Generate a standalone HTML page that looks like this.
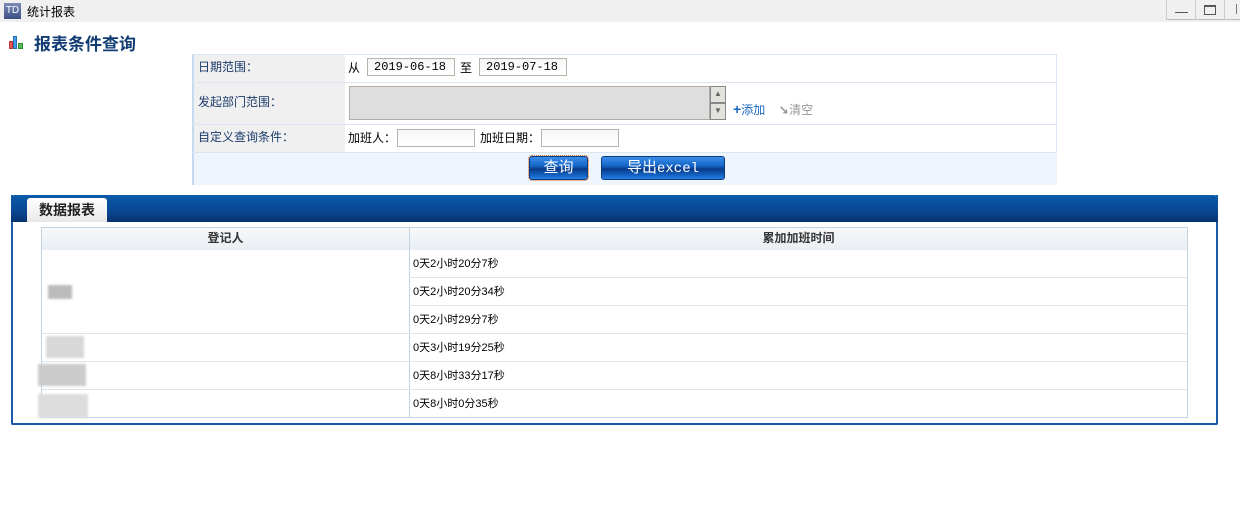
<!DOCTYPE html>
<html><head><meta charset="utf-8"><style>
*{margin:0;padding:0;box-sizing:border-box}
body{width:1240px;height:512px;background:#fff;font-family:"Liberation Sans","Noto Sans CJK SC",sans-serif;font-size:12px;position:relative;overflow:hidden;color:#000}
.a{position:absolute}
.inp{position:absolute;height:18px;border:1px solid #b8b2a8;background:linear-gradient(#f6f6f6,#fff);font-family:"Liberation Mono",monospace;font-size:12px;padding:1px 0 0 6px}
.lab{position:absolute;left:192px;width:153px;background:#f0f0f0;color:#1b3a6b;padding-left:4px;border-left:2px solid #c5daf0}
.hl{position:absolute;left:192px;width:865px;height:1px;background:#dae6f2}
.btn{position:absolute;border:1px solid #0a3a80;border-radius:3px;background:linear-gradient(#3a8ee8 0%,#1466c8 40%,#0a3a88 55%,#1466c8 85%,#2a80e0 100%);color:#fff;font-size:15px;text-align:center;line-height:22px}
.row{position:absolute;left:409px;width:778px;height:1px;background:#dde6ee}
.cell{position:absolute;left:413px;font-size:11px}
.blur{position:absolute;background:#bbb;filter:blur(1px)}
</style></head><body>
<div class="a" style="left:0;top:0;width:1240px;height:22px;background:#f0f0f0"></div>
<div class="a" style="left:4px;top:3px;width:17px;height:16px;background:linear-gradient(#7a8bb8,#3d4f82);color:#fff;font-size:10px;line-height:16px;text-align:center">TD</div>
<div class="a" style="left:27px;top:3px;font-size:12px">统计报表</div>
<div class="a" style="left:1166px;top:0;width:74px;height:20px;border-bottom:1px solid #bbb"></div>
<div class="a" style="left:1166px;top:0;width:1px;height:20px;background:#ccc"></div>
<div class="a" style="left:1195px;top:0;width:1px;height:20px;background:#ccc"></div>
<div class="a" style="left:1224px;top:0;width:1px;height:20px;background:#ccc"></div>
<div class="a" style="left:1175px;top:12px;width:13px;height:1px;background:#555"></div>
<div class="a" style="left:1204px;top:5px;width:12px;height:10px;border:1px solid #555;border-top-width:2px"></div>
<div class="a" style="left:1236px;top:4px;width:1px;height:10px;background:#777"></div>
<!-- header -->
<div class="a" style="left:9px;top:41px;width:4px;height:8px;background:#e55;border:1px solid #b33"></div>
<div class="a" style="left:13px;top:36px;width:4px;height:13px;background:#49e;border:1px solid #27a"></div>
<div class="a" style="left:18px;top:43px;width:5px;height:6px;background:#5b5;border:1px solid #383"></div>
<div class="a" style="left:34px;top:30px;font-size:17px;font-weight:bold;color:#123e74">报表条件查询</div>
<!-- query table -->
<div class="a" style="left:192px;top:54px;width:865px;height:131px;border:1px solid #dae6f2;border-left:none"></div>
<div class="lab" style="top:55px;height:27px;line-height:24px">日期范围：</div>
<div class="lab" style="top:83px;height:41px;line-height:38px">发起部门范围：</div>
<div class="lab" style="top:125px;height:27px;line-height:24px">自定义查询条件：</div>
<div class="a" style="left:192px;top:153px;width:865px;height:32px;background:#eef5fd;border-left:2px solid #c5daf0"></div>
<div class="hl" style="top:82px"></div><div class="hl" style="top:124px"></div><div class="hl" style="top:152px"></div>
<div class="a" style="left:348px;top:59px">从</div>
<div class="inp" style="left:367px;top:58px;width:88px">2019-06-18</div>
<div class="a" style="left:460px;top:59px">至</div>
<div class="inp" style="left:479px;top:58px;width:88px">2019-07-18</div>
<div class="a" style="left:349px;top:86px;width:361px;height:34px;background:#dedede;border:1px solid #b0aca6"></div>
<div class="a" style="left:710px;top:86px;width:16px;height:17px;background:#e4e2dc;border:1px solid #888;color:#666;font-size:8px;text-align:center;line-height:14px">▲</div>
<div class="a" style="left:710px;top:103px;width:16px;height:17px;background:#e4e2dc;border:1px solid #888;color:#666;font-size:8px;text-align:center;line-height:14px">▼</div>
<div class="a" style="left:733px;top:101px;color:#1a68c0"><b style="font-size:14px">+</b>添加</div>
<div class="a" style="left:779px;top:101px;color:#999"><b>➘</b>清空</div>
<div class="a" style="left:348px;top:129px">加班人：</div>
<div class="inp" style="left:397px;top:129px;width:78px"></div>
<div class="a" style="left:480px;top:129px">加班日期：</div>
<div class="inp" style="left:541px;top:129px;width:78px"></div>
<div class="btn" style="left:529px;top:156px;width:59px;height:24px;outline:1px dotted #e07020">查询</div>
<div class="btn" style="left:601px;top:156px;width:124px;height:24px">导出<span style="font-family:'Liberation Mono',monospace;font-size:14px">excel</span></div>
<!-- panel -->
<div class="a" style="left:11px;top:195px;width:1207px;height:230px;border:2px solid #1a5aa8;border-top:none;border-radius:0 0 2px 2px"></div>
<div class="a" style="left:11px;top:195px;width:1207px;height:27px;background:linear-gradient(#0a5aa8,#0a4a98 50%,#083470);border-radius:4px 4px 0 0"></div>
<div class="a" style="left:27px;top:198px;width:80px;height:24px;background:linear-gradient(#fff,#e8e8e8);border-radius:3px 3px 0 0;font-size:14px;font-weight:bold;text-align:center;line-height:24px;color:#222">数据报表</div>
<div class="a" style="left:41px;top:227px;width:1147px;height:191px;border:1px solid #c3d3e0"></div>
<div class="a" style="left:42px;top:228px;width:1145px;height:22px;background:linear-gradient(#f7f9fb,#e8eef3)"></div>
<div class="a" style="left:409px;top:228px;width:1px;height:189px;background:#c3d3e0"></div>
<div class="a" style="left:42px;top:229px;width:367px;text-align:center;font-weight:bold;color:#333">登记人</div>
<div class="a" style="left:410px;top:229px;width:777px;text-align:center;font-weight:bold;color:#333">累加加班时间</div>
<div class="row" style="top:277px"></div><div class="row" style="top:305px"></div>
<div class="row" style="top:333px;left:42px;width:1145px"></div><div class="row" style="top:361px;left:42px;width:1145px"></div><div class="row" style="top:389px;left:42px;width:1145px"></div>
<div class="cell" style="top:255px">0天2小时20分7秒</div>
<div class="cell" style="top:283px">0天2小时20分34秒</div>
<div class="cell" style="top:311px">0天2小时29分7秒</div>
<div class="cell" style="top:339px">0天3小时19分25秒</div>
<div class="cell" style="top:367px">0天8小时33分17秒</div>
<div class="cell" style="top:395px">0天8小时0分35秒</div>
<div class="blur" style="left:48px;top:285px;width:24px;height:14px"></div>
<div class="blur" style="left:46px;top:336px;width:38px;height:22px;background:#d8d8d8"></div>
<div class="blur" style="left:38px;top:364px;width:48px;height:22px;background:#ccc"></div>
<div class="blur" style="left:38px;top:394px;width:50px;height:24px;background:#ddd"></div>
</body></html>
